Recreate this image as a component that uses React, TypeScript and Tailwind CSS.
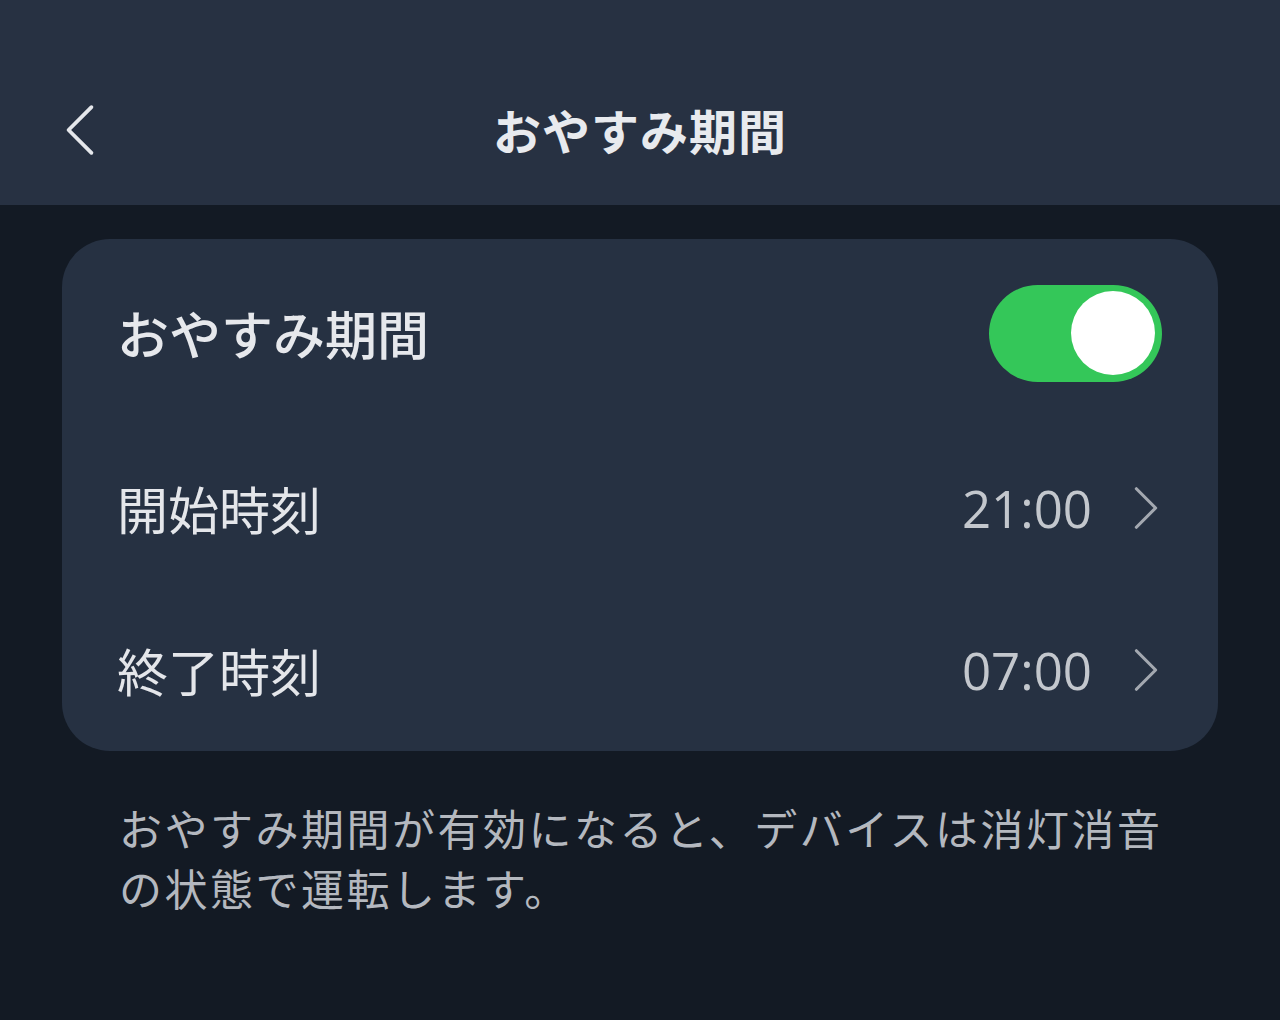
const jp = { fontFamily: '"Noto Sans CJK JP", "Noto Sans", sans-serif' };

function Chevron({ dir, className }: { dir: "left" | "right"; className?: string }) {
  return (
    <svg width="32" height="50" viewBox="0 0 32 50" fill="none" className={className}>
      <path
        d={dir === "left" ? "M27 3 L5 25 L27 47" : "M5 3 L27 25 L5 47"}
        stroke="currentColor"
        strokeWidth="3.6"
        strokeLinecap="round"
        strokeLinejoin="round"
      />
    </svg>
  );
}

function TimeRow({ label, value }: { label: string; value: string }) {
  return (
    <div className="h-[162px] flex items-center justify-between">
      <span className="text-[51px] text-[#e4e6ea]">{label}</span>
      <div className="flex items-center gap-[40px]">
        <span className="text-[51px] text-[#c3c7cd]" style={{ fontFamily: '"Open Sans", sans-serif' }}>
          {value}
        </span>
        <Chevron dir="right" className="w-[28px] h-[46px] text-[#a3a8b0] mr-[2px]" />
      </div>
    </div>
  );
}

export default function App() {
  return (
    <div className="w-[1280px] h-[1020px] bg-[#131a24] flex flex-col" style={jp}>
      <header className="h-[205px] bg-[#273142] flex items-center justify-center relative">
        <Chevron dir="left" className="absolute left-[63px] top-[104px] w-[34px] h-[52px] text-[#e5e7eb]" />
        <h1 className="text-[48px] font-bold text-[#e8eaee] mt-[52px] tracking-[1px]">おやすみ期間</h1>
      </header>

      <main className="px-[62px] pt-[34px]">
        <section className="bg-[#263142] rounded-[48px] px-[56px] pl-[55px]">
          <div className="h-[188px] flex items-center justify-between">
            <span className="text-[52px] font-medium text-[#e6e8ec]">おやすみ期間</span>
            <button className="w-[173px] h-[97px] rounded-full bg-[#34c759] flex items-center justify-end px-[7px]">
              <span className="block w-[84px] h-[84px] rounded-full bg-white" />
            </button>
          </div>
          <TimeRow label="開始時刻" value="21:00" />
          <TimeRow label="終了時刻" value="07:00" />
        </section>

        <p className="mt-[46px] ml-[57px] w-[1060px] text-[43px] leading-[60px] tracking-[2.5px] text-[#b4b8bf]">
          おやすみ期間が有効になると、デバイスは消灯消音の状態で運転します。
        </p>
      </main>
    </div>
  );
}
